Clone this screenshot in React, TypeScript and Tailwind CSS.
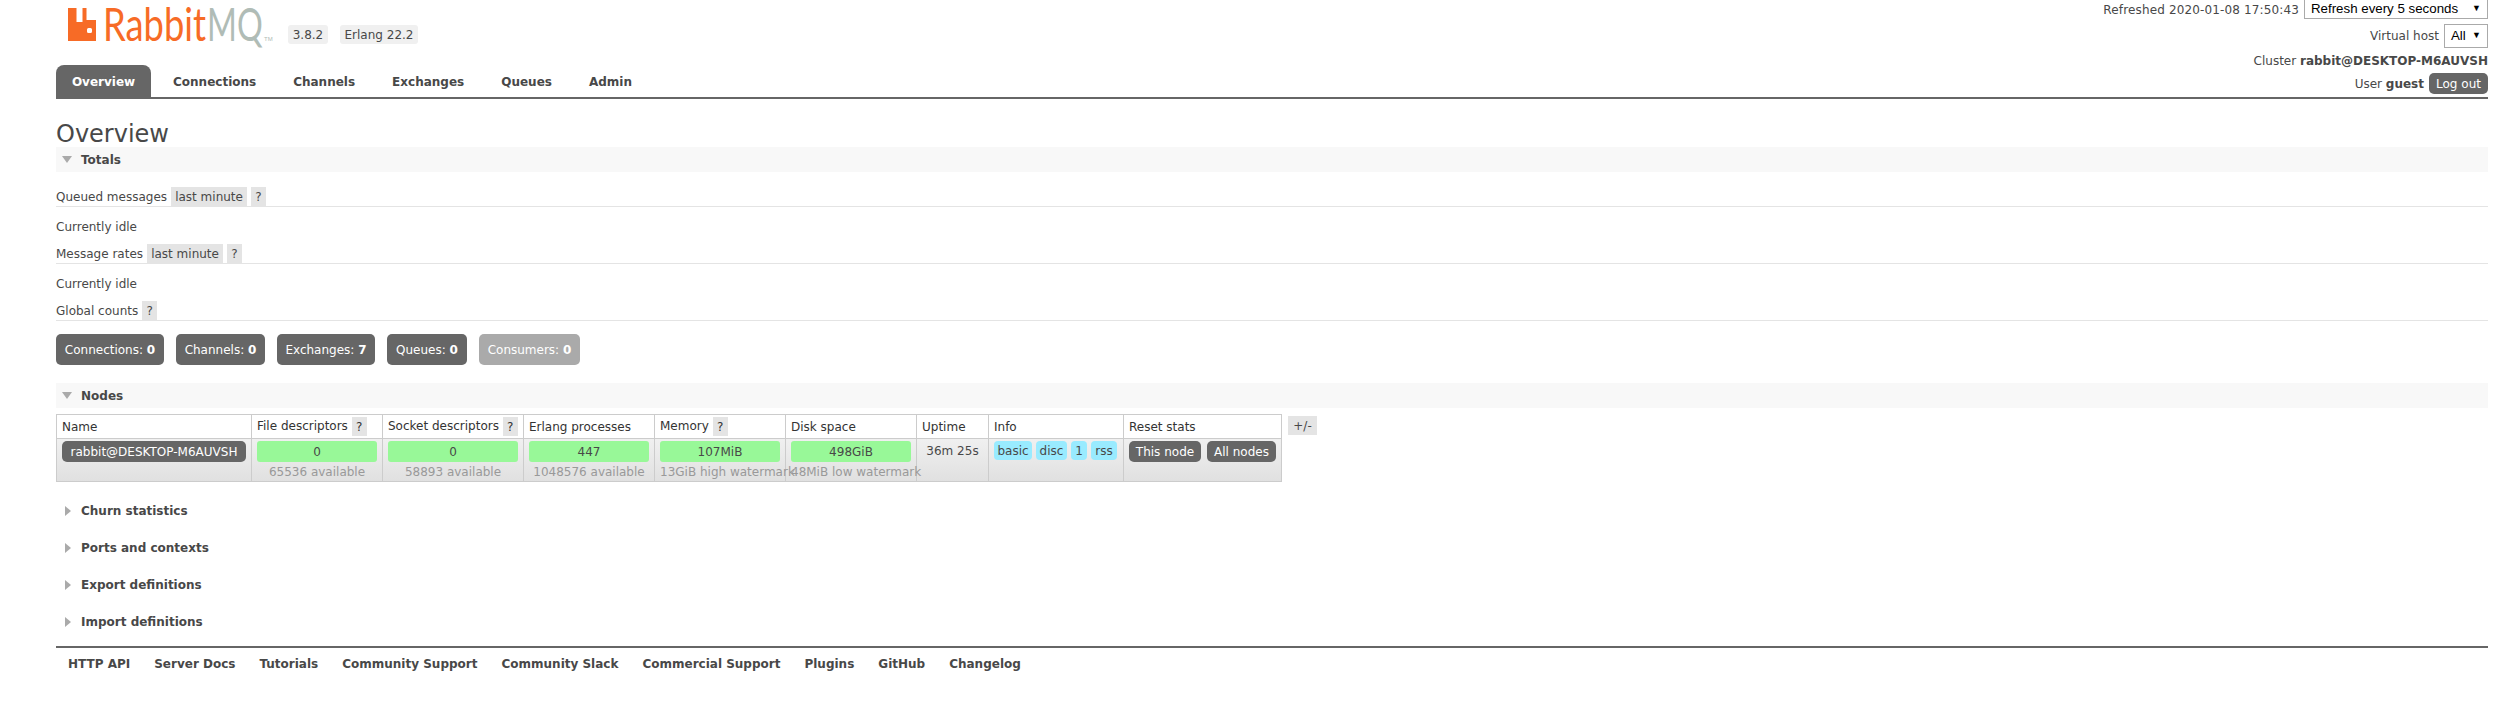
const panelTitle = 'text-[12px] font-bold text-[#484848]';

function Help({ className = '' }: { className?: string }) {
  return (
    <span className={`inline-flex h-[19px] w-[15px] items-center justify-center bg-[#e4e4e4] text-[12px] font-normal ${className}`}>?</span>
  );
}

function Logo() {
  return (
    <svg width="204" height="38" viewBox="0 0 204 38" className="block overflow-visible">
      <path d="M0 2H8.500V16H14.500V2H18.500V14H28V35H0Z M20.500 22a1.500 1.500 0 0 0-1.500 1.500v2a1.500 1.500 0 0 0 1.500 1.500h2a1.500 1.500 0 0 0 1.500-1.500v-2a1.500 1.500 0 0 0-1.500-1.500z" fill="#f76b26" fillRule="evenodd" />
      <g transform="translate(35 35) scale(0.79 1)">
        <text fontSize="46" fill="#f76b26" fontFamily="Lato, 'Liberation Sans', sans-serif">Rabbit</text>
      </g>
      <g transform="translate(139 35) scale(0.7 1)">
        <text fontSize="46" fill="#b0bcb6" fontFamily="Lato, 'Liberation Sans', sans-serif">MQ</text>
      </g>
      <text x="196" y="35" fontSize="6" fill="#b0bcb6" fontFamily="'Liberation Sans', sans-serif">TM</text>
    </svg>
  );
}

function Section({ title, open = false, className = '' }: { title: string; open?: boolean; className?: string }) {
  if (open) {
    return (
      <div className={`flex h-[25px] items-center bg-[#f8f8f8] pl-[6px] ${className}`}>
        <span className="mr-[9px] h-0 w-0 border-x-[5px] border-t-[7px] border-x-transparent border-t-[#aaaaaa]" />
        <span className={panelTitle}>{title}</span>
      </div>
    );
  }
  return (
    <div className={`flex h-[25px] items-center pl-[9px] ${className}`}>
      <span className="mr-[10px] h-0 w-0 border-y-[5px] border-l-[6px] border-y-transparent border-l-[#aaaaaa]" />
      <span className={panelTitle}>{title}</span>
    </div>
  );
}

function UpdateRow({ label, badge }: { label: string; badge?: boolean }) {
  return (
    <div className="flex h-[20px] items-center border-b border-[#e4e4e4] text-[12px]">
      <span className="mr-[4px] pt-[1px]">{label}</span>
      {badge && <span className="mr-[4px] flex h-[19px] w-[76px] items-center justify-center bg-[#e4e4e4] pt-[1px]">last minute</span>}
      <Help />
    </div>
  );
}

const counts = [
  { label: 'Connections', value: 0, w: 'w-[108px]', bg: 'bg-[#666666]' },
  { label: 'Channels', value: 0, w: 'w-[89px]', bg: 'bg-[#666666]' },
  { label: 'Exchanges', value: 7, w: 'w-[98px]', bg: 'bg-[#666666]' },
  { label: 'Queues', value: 0, w: 'w-[80px]', bg: 'bg-[#666666]' },
  { label: 'Consumers', value: 0, w: 'w-[101px]', bg: 'bg-[#aaaaaa]' },
];

const th = 'border border-[#cccccc] bg-white px-[5px] py-0 text-left text-[12px] font-normal text-[#333333] h-[24px] whitespace-nowrap';
const td = 'border border-[#cccccc] px-[5px] pt-[2px] align-top text-[12px]';

function Meter({ value, sub }: { value: string; sub: string }) {
  return (
    <td className={td}>
      <div className="flex h-[21px] items-center justify-center rounded-[3px] bg-[#98f898]">{value}</div>
      <div className="mt-[1px] whitespace-nowrap text-center text-[#999999]">{sub}</div>
    </td>
  );
}

function Overflowing({ value, sub }: { value: string; sub: string }) {
  return (
    <td className={td}>
      <div className="flex h-[21px] items-center justify-center rounded-[3px] bg-[#98f898]">{value}</div>
      <div className="mt-[1px] whitespace-nowrap text-[#999999]">{sub}</div>
    </td>
  );
}

function Pill({ children, w }: { children: string; w: string }) {
  return <span className={`flex h-[19px] items-center justify-center rounded-[4px] bg-[#99ebff] ${w}`}>{children}</span>;
}

function NodesTable() {
  return (
    <div className="mt-[6px] flex items-start">
      <table className="w-[1225px] table-fixed border-collapse border border-[#cccccc]">
        <colgroup>
          <col className="w-[195px]" />
          <col className="w-[131px]" />
          <col className="w-[141px]" />
          <col className="w-[131px]" />
          <col className="w-[131px]" />
          <col className="w-[131px]" />
          <col className="w-[72px]" />
          <col className="w-[135px]" />
          <col className="w-[158px]" />
        </colgroup>
        <thead>
          <tr>
            <th className={th}>Name</th>
            <th className={th}>File descriptors <Help className="align-middle" /></th>
            <th className={th}>Socket descriptors <Help className="align-middle" /></th>
            <th className={th}>Erlang processes</th>
            <th className={th}>Memory <Help className="align-middle" /></th>
            <th className={th}>Disk space</th>
            <th className={th}>Uptime</th>
            <th className={th}>Info</th>
            <th className={th}>Reset stats</th>
          </tr>
        </thead>
        <tbody>
          <tr className="h-[40px] bg-gradient-to-b from-[#f0f0f0] to-[#e0e0e0]">
            <td className={td}>
              <div className="flex h-[21px] items-center justify-center whitespace-nowrap rounded-[5px] bg-[#666666] text-white">rabbit@DESKTOP-M6AUVSH</div>
            </td>
            <Meter value="0" sub="65536 available" />
            <Meter value="0" sub="58893 available" />
            <Meter value="447" sub="1048576 available" />
            <Overflowing value="107MiB" sub="13GiB high watermark" />
            <Overflowing value="498GiB" sub="48MiB low watermark" />
            <td className={`${td} text-center`}>
              <div className="flex h-[19px] items-center justify-center whitespace-nowrap">36m 25s</div>
            </td>
            <td className={td}>
              <div className="flex gap-[4px]">
                <Pill w="w-[38px]">basic</Pill>
                <Pill w="w-[31px]">disc</Pill>
                <Pill w="w-[16px]">1</Pill>
                <Pill w="w-[26px]">rss</Pill>
              </div>
            </td>
            <td className={td}>
              <div className="flex gap-[6px] text-white">
                <span className="flex h-[21px] w-[72px] items-center justify-center rounded-[5px] bg-[#666666]">This node</span>
                <span className="flex h-[21px] w-[69px] items-center justify-center rounded-[5px] bg-[#666666]">All nodes</span>
              </div>
            </td>
          </tr>
        </tbody>
      </table>
      <span className="ml-[6px] mt-[2px] flex h-[19px] w-[29px] items-center justify-center bg-[#e4e4e4] text-[12px]">+/-</span>
    </div>
  );
}

const tabs = ['Connections', 'Channels', 'Exchanges', 'Queues', 'Admin'];
const footerLinks = ['HTTP API', 'Server Docs', 'Tutorials', 'Community Support', 'Community Slack', 'Commercial Support', 'Plugins', 'GitHub', 'Changelog'];

export default function App() {
  return (
    <div className="min-h-[721px] bg-white pl-[56px] pr-[10px] font-['DejaVu_Sans',Verdana,sans-serif] text-[12px] text-[#484848]">
      <header className="flex h-[99px] justify-between border-b-2 border-[#666666]">
        <div className="flex flex-col justify-between">
          <div className="flex items-end pl-[12px] pt-[6px]">
            <Logo />
            <span className="ml-[16px] flex h-[19px] w-[40px] items-center justify-center rounded-[3px] bg-[#f0f0f0]">3.8.2</span>
            <span className="ml-[12px] flex h-[19px] w-[78px] items-center justify-center rounded-[3px] bg-[#f0f0f0]">Erlang 22.2</span>
          </div>
          <nav className="flex items-stretch gap-[37px] text-[12px] font-bold">
            <span className="-mr-[15px] flex h-[32px] w-[95px] items-center justify-center rounded-t-[8px] bg-[#666666] pt-[1px] text-white">Overview</span>
            {tabs.map((t) => (
              <span key={t} className="flex h-[32px] items-center pt-[1px]">{t}</span>
            ))}
          </nav>
        </div>
        <div className="flex flex-col items-end">
          <div className="flex items-center">
            <span className="mr-[5px] tracking-[0.14px]">Refreshed 2020-01-08 17:50:43</span>
            <div className="flex h-[19px] w-[184px] items-center justify-between border border-t-0 border-[#aaaaaa] pl-[6px] pr-[6px] font-['Liberation_Sans',Arial,sans-serif] text-[13.300px] text-black">
              <span>Refresh every 5 seconds</span>
              <span className="text-[9px]">▼</span>
            </div>
          </div>
          <div className="mt-[5px] flex items-center">
            <span className="mr-[5px]">Virtual host</span>
            <div className="flex h-[24px] w-[44px] items-center justify-between border border-[#aaaaaa] pl-[6px] pr-[6px] font-['Liberation_Sans',Arial,sans-serif] text-[13.300px] text-black">
              <span>All</span>
              <span className="text-[9px]">▼</span>
            </div>
          </div>
          <div className="mt-[4px]">Cluster <b>rabbit@DESKTOP-M6AUVSH</b></div>
          <div className="mt-[3px] flex items-center">
            <span className="mr-[5px]">User <b>guest</b></span>
            <span className="flex h-[21px] w-[59px] items-center justify-center rounded-[5px] bg-[#666666] text-white">Log out</span>
          </div>
        </div>
      </header>

      <main>
        <h1 className="mt-[20px] h-[28px] text-[24px] font-normal leading-[30px] text-[#484848]">Overview</h1>
        <Section title="Totals" open />
        <div className="mt-[15px]">
          <UpdateRow label="Queued messages" badge />
          <div className="flex h-[37px] items-center pt-[2px]">Currently idle</div>
          <UpdateRow label="Message rates" badge />
          <div className="flex h-[37px] items-center pt-[2px]">Currently idle</div>
          <UpdateRow label="Global counts" />
        </div>
        <div className="mt-[13px] flex gap-[12px]">
          {counts.map((c) => (
            <span key={c.label} className={`flex h-[31px] items-center justify-center rounded-[5px] text-white ${c.w} ${c.bg}`}>
              {c.label}:&nbsp;<b>{c.value}</b>
            </span>
          ))}
        </div>
        <Section title="Nodes" open className="mt-[18px]" />
        <NodesTable />
        <div className="mt-[16px] flex flex-col gap-[12px]">
          <Section title="Churn statistics" />
          <Section title="Ports and contexts" />
          <Section title="Export definitions" />
          <Section title="Import definitions" />
        </div>
      </main>

      <footer className="mt-[12px] flex h-[33px] items-center border-t-2 border-[#666666] pl-[12px] font-bold">
        {footerLinks.map((l) => (
          <span key={l} className="mr-[24px]">{l}</span>
        ))}
      </footer>
    </div>
  );
}
